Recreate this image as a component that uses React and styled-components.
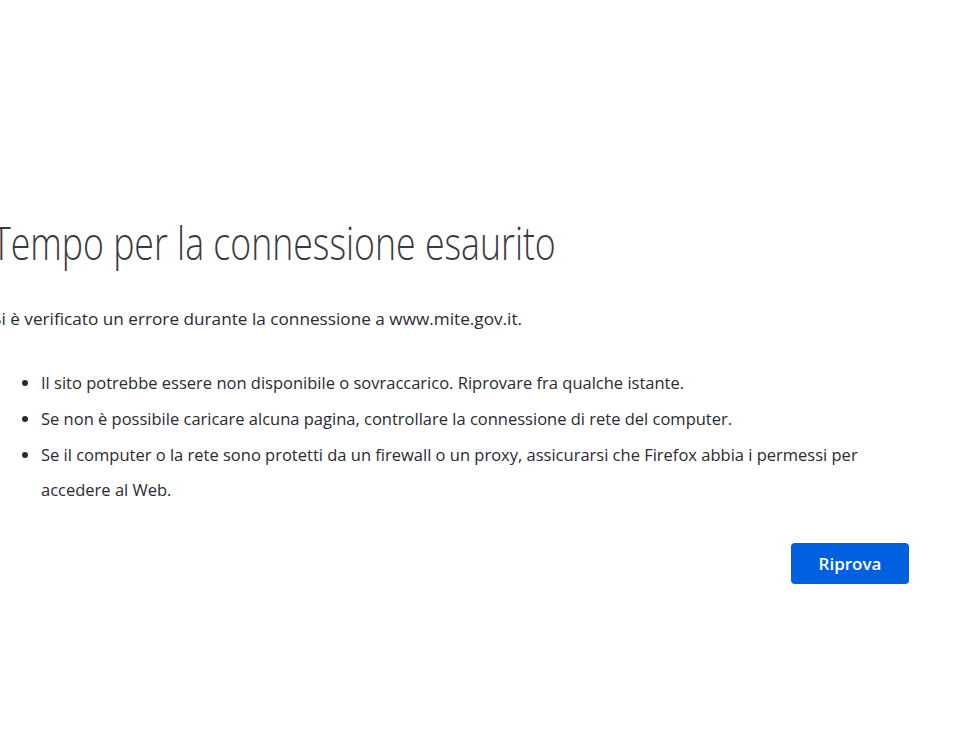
import React from "react";
import styled, { createGlobalStyle } from "styled-components";

const GlobalStyle = createGlobalStyle`
  html, body {
    margin: 0;
    padding: 0;
    background: #fff;
  }
  body {
    font-family: "Open Sans", "Noto Sans", sans-serif;
    color: #2b2a33;
    overflow: hidden;
  }
`;

// the screenshot is cropped on the left, so the column starts a bit off-screen
const Page = styled.div`
  width: 917px;
  margin-left: -8px;
  padding-top: 214px;
`;

const Title = styled.h1`
  margin: 0;
  font-size: 46px;
  line-height: 56px;
  font-weight: 300;
  color: #3b3a42;
  white-space: nowrap;
  transform: scaleX(0.775);
  transform-origin: 0 0;
`;

const Intro = styled.p`
  margin: 31px 0 0;
  font-size: 17.2px;
  line-height: 35px;
  color: #2b2a33;
`;

const List = styled.ul`
  margin: 29px 0 0;
  padding-left: 49px;
  font-size: 16.5px;
  line-height: 35px;
  color: #2b2a33;
`;

const Item = styled.li`
  margin-bottom: 1px;
`;

const Actions = styled.div`
  display: flex;
  justify-content: flex-end;
  margin-top: 36px;
`;

const Button = styled.button`
  width: 118px;
  height: 41px;
  border: none;
  border-radius: 4px;
  background: #0061e0;
  color: #fff;
  font-family: inherit;
  font-size: 17px;
  font-weight: 600;
  cursor: pointer;
`;

const tips = [
  "Il sito potrebbe essere non disponibile o sovraccarico. Riprovare fra qualche istante.",
  "Se non è possibile caricare alcuna pagina, controllare la connessione di rete del computer.",
  "Se il computer o la rete sono protetti da un firewall o un proxy, assicurarsi che Firefox abbia i permessi per accedere al Web.",
];

export default function App() {
  return (
    <>
      <GlobalStyle />
      <Page>
        <Title>Tempo per la connessione esaurito</Title>
        <Intro>Si è verificato un errore durante la connessione a www.mite.gov.it.</Intro>
        <List>
          {tips.map((tip, i) => (
            <Item key={i}>{tip}</Item>
          ))}
        </List>
        <Actions>
          <Button>Riprova</Button>
        </Actions>
      </Page>
    </>
  );
}
